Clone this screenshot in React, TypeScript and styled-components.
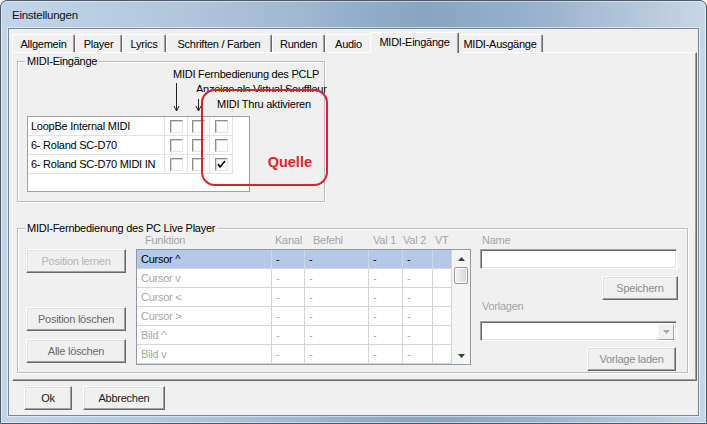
import styled, { createGlobalStyle } from "styled-components";

const GlobalStyle = createGlobalStyle`
  * { box-sizing: border-box; }
  html, body {
    margin: 0;
    padding: 0;
    background: #ffffff;
  }
  body {
    font-family: "Liberation Sans", Arial, sans-serif;
    font-size: 11px;
    letter-spacing: -0.25px;
    color: #000;
  }
`;

type TabDef = { label: string; w: number; active?: boolean };

const tabs: TabDef[] = [
  { label: "Allgemein", w: 63 },
  { label: "Player", w: 47 },
  { label: "Lyrics", w: 44 },
  { label: "Schriften / Farben", w: 106 },
  { label: "Runden", w: 53 },
  { label: "Audio", w: 47 },
  { label: "MIDI-Eingänge", w: 85, active: true },
  { label: "MIDI-Ausgänge", w: 86 },
];

const devices = [
  { name: "LoopBe Internal MIDI", checks: [false, false, false] },
  { name: "6- Roland SC-D70", checks: [false, false, false] },
  { name: "6- Roland SC-D70 MIDI IN", checks: [false, false, true] },
];

const functions = ["Cursor ^", "Cursor v", "Cursor <", "Cursor >", "Bild ^", "Bild v"];

const columns = [
  { label: "Funktion", pad: 8 },
  { label: "Kanal", pad: 3 },
  { label: "Befehl", pad: 8 },
  { label: "Val 1", pad: 4 },
  { label: "Val 2", pad: 0 },
  { label: "VT", pad: 2 },
];

const COLS = "135px 33px 64px 34px 30px 19px";

export default function App() {
  return (
    <>
      <GlobalStyle />
      <Window>
        <TitleBar>Einstellungen</TitleBar>
        <Client>
          <TabStrip>
            {tabs.map((t) => (
              <Tab key={t.label} $w={t.w} $active={t.active}>
                {t.label}
              </Tab>
            ))}
          </TabStrip>
          <TabPanel>
            <GroupBox $w={308} $h={141} $pt={54} $pl={9}>
              <GroupTitle>MIDI-Eingänge</GroupTitle>
              <HeadLabel $left={155} $top={6}>MIDI Fernbedienung des PCLP</HeadLabel>
              <HeadLabel $left={178} $top={21} $clip={139}>
                Anzeige als Virtual Souffleur
              </HeadLabel>
              <ThruLabel>MIDI Thru aktivieren</ThruLabel>
              <Arrow $left={155} $top={21} $h={29} />
              <Arrow $left={177} $top={37} $h={13} />
              <ListBox>
                {devices.map((d) => (
                  <DeviceRow key={d.name}>
                    <DeviceName>{d.name}</DeviceName>
                    {d.checks.map((c, i) => (
                      <CheckCell key={i}>
                        <CheckBox>
                          {c && (
                            <svg width="11" height="11" viewBox="0 0 11 11">
                              <polyline
                                points="2,5 4,8 9,2"
                                fill="none"
                                stroke="#000"
                                strokeWidth="1.6"
                              />
                            </svg>
                          )}
                        </CheckBox>
                      </CheckCell>
                    ))}
                  </DeviceRow>
                ))}
              </ListBox>
              <Annotation>
                <AnnotationText>Quelle</AnnotationText>
              </Annotation>
            </GroupBox>

            <GroupBox $w={671} $h={145} $pt={0} $pl={8} $mt={26}>
              <GroupTitle>MIDI-Fernbedienung des PC Live Player</GroupTitle>
              <RemoteLayout>
                <SideButtons>
                  <Button $w={100} $tone="off">Position lernen</Button>
                  <Button $w={100} $tone="dim" $mt={34}>Position löschen</Button>
                  <Button $w={100} $tone="dim" $mt={8}>Alle löschen</Button>
                </SideButtons>

                <TableColumn>
                  <HeaderRow>
                    {columns.map((c) => (
                      <HeaderCell key={c.label} $pad={c.pad}>
                        {c.label}
                      </HeaderCell>
                    ))}
                  </HeaderRow>
                  <Table>
                    <Rows>
                      {functions.map((f, r) => {
                        const sel = r === 0;
                        return [
                          <Cell key={f} $sel={sel}>{f}</Cell>,
                          <Cell key={f + "k"} $sel={sel}>-</Cell>,
                          <Cell key={f + "b"} $sel={sel}>-</Cell>,
                          <Cell key={f + "1"} $sel={sel}>-</Cell>,
                          <Cell key={f + "2"} $sel={sel}>-</Cell>,
                          <Cell key={f + "v"} $sel={sel} />,
                        ];
                      })}
                    </Rows>
                    <ScrollBar>
                      <ScrollArrow>
                        <svg width="7" height="4" viewBox="0 0 7 4">
                          <polygon points="0,4 3.5,0 7,4" fill="#3c3c3c" />
                        </svg>
                      </ScrollArrow>
                      <Thumb />
                      <ScrollTrack />
                      <ScrollArrow>
                        <svg width="7" height="4" viewBox="0 0 7 4">
                          <polygon points="0,0 3.5,4 7,0" fill="#3c3c3c" />
                        </svg>
                      </ScrollArrow>
                    </ScrollBar>
                  </Table>
                </TableColumn>

                <PresetColumn>
                  <FieldLabel>Name</FieldLabel>
                  <TextField />
                  <Button $w={76} $tone="grey" $mt={7} $right={0}>Speichern</Button>
                  <FieldLabel $mt={-5}>Vorlagen</FieldLabel>
                  <ComboField>
                    <ComboButton>
                      <svg width="7" height="4" viewBox="0 0 7 4">
                        <polygon points="0,0 3.5,4 7,0" fill="#a8a8a8" />
                      </svg>
                    </ComboButton>
                  </ComboField>
                  <Button $w={89} $tone="grey" $mt={6} $right={2}>Vorlage laden</Button>
                </PresetColumn>
              </RemoteLayout>
            </GroupBox>
          </TabPanel>
          <DialogButtons>
            <Button $w={48} $tone="normal">Ok</Button>
            <Button $w={82} $tone="normal">Abbrechen</Button>
          </DialogButtons>
        </Client>
      </Window>
    </>
  );
}

function Arrow({ $left, $top, $h }: { $left: number; $top: number; $h: number }) {
  return (
    <ArrowBox $left={$left} $top={$top}>
      <svg width="7" height={$h} viewBox={`0 0 7 ${$h}`}>
        <line x1="3.5" y1="0" x2="3.5" y2={$h - 1} stroke="#222" strokeWidth="1" />
        <polyline
          points={`1,${$h - 6} 3.5,${$h - 1} 6,${$h - 6}`}
          fill="none"
          stroke="#222"
          strokeWidth="1"
        />
      </svg>
    </ArrowBox>
  );
}

const Window = styled.div`
  width: 707px;
  height: 424px;
  display: flex;
  flex-direction: column;
  padding: 0 7px 7px 7px;
  border: 1px solid #4b5a6c;
  border-radius: 7px 7px 0 0;
  background: linear-gradient(
    90deg,
    #c3d5e8 0%,
    #b4c9de 22%,
    #a0b8d0 42%,
    #89a4c0 60%,
    #9cb4cd 78%,
    #c7d7e7 100%
  );
  box-shadow: inset 0 0 0 1px rgba(255, 255, 255, 0.45);
`;

const TitleBar = styled.div`
  height: 27px;
  display: flex;
  align-items: center;
  padding: 1px 0 0 4px;
  font-size: 11.5px;
  color: #111;
`;

const Client = styled.div`
  flex: 1;
  display: flex;
  flex-direction: column;
  padding: 3px 1px 0 3px;
  background: #f0f0f0;
  border: 1px solid #74889e;
  box-shadow: 0 0 0 1px rgba(255, 255, 255, 0.5);
`;

const TabStrip = styled.div`
  height: 20px;
  display: flex;
  align-items: flex-end;
`;

const Tab = styled.div<{ $w: number; $active?: boolean }>`
  position: relative;
  z-index: ${(p) => (p.$active ? 2 : 1)};
  width: ${(p) => (p.$active ? p.$w + 4 : p.$w)}px;
  height: ${(p) => (p.$active ? 21 : 18)}px;
  margin: 0 ${(p) => (p.$active ? -2 : 0)}px ${(p) => (p.$active ? -1 : 0)}px;
  display: flex;
  align-items: center;
  justify-content: center;
  padding-bottom: ${(p) => (p.$active ? 2 : 0)}px;
  background: #f0f0f0;
  border-top: 1px solid #ffffff;
  border-left: 1px solid #ffffff;
  border-right: 1px solid #696969;
  box-shadow: inset -1px 0 0 #a0a0a0;
  border-radius: 2px 2px 0 0;
  white-space: nowrap;
`;

const TabPanel = styled.div`
  position: relative;
  z-index: 0;
  height: 329px;
  display: flex;
  flex-direction: column;
  padding: 8px 0 0 4px;
  border-top: 1px solid #ffffff;
  border-left: 1px solid #ffffff;
  border-right: 1px solid #696969;
  border-bottom: 1px solid #696969;
  box-shadow: inset -1px -1px 0 #a0a0a0;
`;

const GroupBox = styled.div<{ $w: number; $h: number; $pt: number; $pl: number; $mt?: number }>`
  position: relative;
  width: ${(p) => p.$w}px;
  height: ${(p) => p.$h}px;
  margin-top: ${(p) => p.$mt ?? 0}px;
  padding: ${(p) => p.$pt}px 0 0 ${(p) => p.$pl}px;
  border: 1px solid #bdbdbd;
  box-shadow: inset 1px 1px 0 #ffffff, 1px 1px 0 #ffffff;
`;

const GroupTitle = styled.div`
  position: absolute;
  top: -7px;
  left: 7px;
  padding: 0 2px;
  line-height: 13px;
  background: #f0f0f0;
`;

const HeadLabel = styled.div<{ $left: number; $top: number; $clip?: number }>`
  position: absolute;
  left: ${(p) => p.$left}px;
  top: ${(p) => p.$top}px;
  width: ${(p) => (p.$clip ? `${p.$clip}px` : "auto")};
  overflow: hidden;
  line-height: 13px;
  white-space: nowrap;
`;

const ThruLabel = styled.div`
  position: absolute;
  left: 177px;
  top: 30px;
  width: 128px;
  height: 20px;
  padding: 6px 0 0 22px;
  line-height: 13px;
  white-space: nowrap;
  background: #f0f0f0;
`;

const ArrowBox = styled.div<{ $left: number; $top: number }>`
  position: absolute;
  z-index: 2;
  left: ${(p) => p.$left}px;
  top: ${(p) => p.$top}px;
  line-height: 0;
`;

const ListBox = styled.div`
  width: 223px;
  height: 76px;
  background: #ffffff;
  border: 1px solid #a0a0a0;
`;

const DeviceRow = styled.div`
  width: 205px;
  height: 19px;
  display: grid;
  grid-template-columns: 137px 23px 22px 23px;
  border-bottom: 1px solid #e2e2e2;
`;

const DeviceName = styled.div`
  display: flex;
  align-items: center;
  padding-left: 3px;
  border-right: 1px solid #e2e2e2;
  white-space: nowrap;
  overflow: hidden;
`;

const CheckCell = styled.div`
  display: flex;
  align-items: center;
  justify-content: center;
  border-right: 1px solid #e2e2e2;
`;

const CheckBox = styled.div`
  width: 13px;
  height: 13px;
  display: flex;
  align-items: center;
  justify-content: center;
  background: #ffffff;
  border: 1px solid;
  border-color: #8e8e8e #e6e6e6 #e6e6e6 #8e8e8e;
  box-shadow: inset 1px 1px 0 #d4d4d4;
`;

const Annotation = styled.div`
  position: absolute;
  z-index: 3;
  left: 183px;
  top: 27px;
  width: 127px;
  height: 97px;
  display: flex;
  align-items: flex-end;
  justify-content: flex-end;
  padding: 0 14px 13px 0;
  border: 2.5px solid #d8222d;
  border-radius: 14px;
`;

const AnnotationText = styled.div`
  font-size: 14.5px;
  font-weight: bold;
  letter-spacing: 0;
  line-height: 17px;
  color: #e0242c;
`;

const RemoteLayout = styled.div`
  display: grid;
  grid-template-columns: 100px 335px 197px;
  column-gap: 10px;
  height: 100%;
`;

const SideButtons = styled.div`
  display: flex;
  flex-direction: column;
  padding-top: 20px;
`;

const Button = styled.button<{
  $w: number;
  $tone: "normal" | "dim" | "off" | "grey";
  $mt?: number;
  $right?: number;
}>`
  width: ${(p) => p.$w}px;
  height: 24px;
  flex-shrink: 0;
  margin-top: ${(p) => p.$mt ?? 0}px;
  margin-left: ${(p) => (p.$right !== undefined ? "auto" : "0")};
  margin-right: ${(p) => p.$right ?? 0}px;
  padding: 0;
  font: inherit;
  letter-spacing: inherit;
  color: ${(p) =>
    p.$tone === "normal"
      ? "#1a1a1a"
      : p.$tone === "dim"
      ? "#6a6a6a"
      : p.$tone === "grey"
      ? "#8c8c8c"
      : "#b4b4b4"};
  background: #f0f0f0;
  border: 1px solid;
  border-color: #ffffff #696969 #696969 #ffffff;
  box-shadow: inset -1px -1px 0 #a0a0a0, inset 1px 1px 0 #e3e3e3;
`;

const TableColumn = styled.div`
  display: flex;
  flex-direction: column;
`;

const HeaderRow = styled.div`
  height: 20px;
  display: grid;
  grid-template-columns: ${COLS};
  padding-left: 1px;
`;

const HeaderCell = styled.div<{ $pad: number }>`
  display: flex;
  align-items: flex-end;
  padding: 0 0 2px ${(p) => p.$pad}px;
  line-height: 13px;
  color: #a4a4a4;
  white-space: nowrap;
`;

const Table = styled.div`
  width: 335px;
  height: 116px;
  display: flex;
  background: #ffffff;
  border: 1px solid #8e9aa8;
`;

const Rows = styled.div`
  display: grid;
  grid-template-columns: ${COLS};
  grid-auto-rows: 19px;
  align-content: start;
`;

const Cell = styled.div<{ $sel?: boolean }>`
  display: flex;
  align-items: center;
  padding-left: 4px;
  white-space: nowrap;
  overflow: hidden;
  color: ${(p) => (p.$sel ? "#000000" : "#a8a8a8")};
  background: ${(p) => (p.$sel ? "#b4c9e8" : "#ffffff")};
  border-right: 1px solid #d6d6d6;
  border-bottom: 1px solid #d6d6d6;
`;

const ScrollBar = styled.div`
  width: 18px;
  display: flex;
  flex-direction: column;
  align-items: center;
  background: #f4f4f4;
`;

const ScrollArrow = styled.div`
  width: 18px;
  height: 17px;
  display: flex;
  align-items: center;
  justify-content: center;
`;

const Thumb = styled.div`
  width: 14px;
  height: 17px;
  border: 1px solid #979797;
  border-radius: 2px;
  background: linear-gradient(90deg, #f2f2f2 0%, #e4e4e4 50%, #d6d6d6 100%);
  box-shadow: inset 0 0 0 1px #fafafa;
`;

const ScrollTrack = styled.div`
  flex: 1;
`;

const PresetColumn = styled.div`
  display: flex;
  flex-direction: column;
  margin-left: -1px;
`;

const FieldLabel = styled.div<{ $mt?: number }>`
  height: 20px;
  display: flex;
  align-items: flex-end;
  margin-top: ${(p) => p.$mt ?? 0}px;
  padding: 0 0 2px 2px;
  line-height: 13px;
  color: #a4a4a4;
`;

const TextField = styled.div`
  width: 197px;
  height: 20px;
  background: #ffffff;
  border: 1px solid;
  border-color: #a0a0a0 #ffffff #ffffff #a0a0a0;
  box-shadow: inset 1px 1px 0 #696969, inset -1px -1px 0 #e3e3e3;
`;

const ComboField = styled(TextField)`
  margin-top: 6px;
  display: flex;
  justify-content: flex-end;
  padding: 2px;
`;

const ComboButton = styled.div`
  width: 16px;
  height: 16px;
  display: flex;
  align-items: center;
  justify-content: center;
  background: #f0f0f0;
  border: 1px solid;
  border-color: #f8f8f8 #a0a0a0 #a0a0a0 #f8f8f8;
`;

const DialogButtons = styled.div`
  display: flex;
  gap: 11px;
  margin-top: 5px;
  padding-left: 12px;
`;
